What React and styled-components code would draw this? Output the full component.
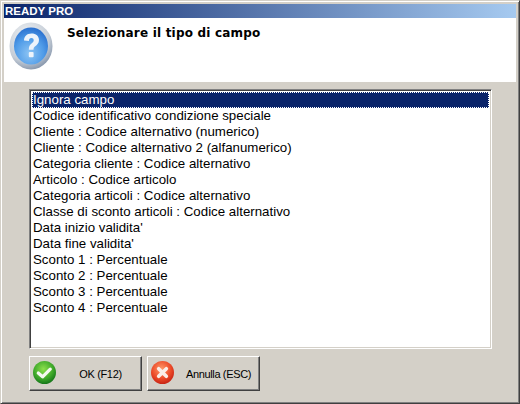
import React from 'react';
import styled, { createGlobalStyle } from 'styled-components';

const Global = createGlobalStyle`
  html, body { margin: 0; padding: 0; background: #d4d0c8; }
  * { box-sizing: border-box; }
`;

const Win = styled.div`
  width: 520px; height: 404px; display: flex; flex-direction: column;
  background: #d4d0c8; padding: 3px;
  border-top: 1px solid #d4d0c8;
  border-left: 1px solid #d4d0c8;
  border-right: 1px solid #404040;
  border-bottom: 1px solid #404040;
  box-shadow: inset 1px 1px 0 #fff, inset -1px -1px 0 #808080;
  font-family: "Liberation Sans", Arial, sans-serif;
`;
const TitleBar = styled.div`
  height: 14px; flex: none; padding-left: 1px;
  background: linear-gradient(90deg, #0a246a, #a6caf0);
  color: #fff; font: bold 11.500px/14px "Liberation Sans", sans-serif;
`;
const Header = styled.div`
  height: 64px; flex: none; background: #fff; display: flex; padding: 4px 0 0 5px;
`;
const HeadText = styled.div`
  margin: 4px 0 0 14px; font: bold 12px/14px "DejaVu Sans", sans-serif; letter-spacing: 0.2px; color: #000;
`;
const Body = styled.div`
  flex: 1; display: flex; flex-direction: column; padding: 7px 0 0 25px;
`;
const List = styled.div`
  width: 463px; height: 260px; background: #fff; padding: 2px;
  border-top: 1px solid #808080; border-left: 1px solid #808080;
  border-right: 1px solid #fff; border-bottom: 1px solid #fff;
  box-shadow: inset 1px 1px 0 #404040, inset -1px -1px 0 #d4d0c8;
`;
const Item = styled.div`
  height: 16px; font-size: 13.300px; line-height: 16px; padding-left: 1px; white-space: nowrap;
  color: ${p => (p.$sel ? '#fff' : '#000')};
  background: ${p => (p.$sel ? '#0a246a' : 'transparent')};
  outline: ${p => (p.$sel ? '1px dotted #fff' : 'none')};
  outline-offset: -1px;
`;
const Buttons = styled.div`
  display: flex; gap: 5px; margin-top: 7px;
`;
const Btn = styled.div`
  width: 113px; height: 35px; background: #d4d0c8; display: flex; align-items: center;
  padding: 0 0 3px 3px; font-size: 11px; letter-spacing: -0.35px; color: #000;
  border-top: 1px solid #fff; border-left: 1px solid #fff;
  border-right: 1px solid #404040; border-bottom: 1px solid #404040;
  box-shadow: inset -1px -1px 0 #808080;
`;
const BtnLabel = styled.span`
  flex: 1; text-align: center; padding: 3px 0 0 ${p => p.$pad}px;
`;

const Question = () => (
  <svg width="44" height="48" viewBox="0 0 44 44" preserveAspectRatio="none">
    <defs>
      <radialGradient id="qr" cx="40%" cy="30%" r="75%">
        <stop offset="0" stopColor="#f2f4f6" />
        <stop offset="0.7" stopColor="#c4ccd6" />
        <stop offset="1" stopColor="#7d8ea6" />
      </radialGradient>
      <radialGradient id="qb" cx="45%" cy="70%" r="70%">
        <stop offset="0" stopColor="#8cc4f4" />
        <stop offset="0.6" stopColor="#4f9be8" />
        <stop offset="1" stopColor="#2a70cf" />
      </radialGradient>
    </defs>
    <circle cx="22" cy="22" r="21.500" fill="url(#qr)" />
    <circle cx="22" cy="22" r="17" fill="url(#qb)" />
    <path d="M15 17c0-4 3-6.500 7.500-6.500S30 13 30 16.500c0 3-2 4.500-3.800 5.800-1.300 1-1.700 1.700-1.700 3.200h-4.700c0-3 .8-4.300 2.700-5.800 1.300-1 2.200-1.700 2.200-3 0-1.200-.9-2-2.300-2-1.600 0-2.400 1-2.500 2.800z" fill="#eef4fb" />
    <rect x="19.800" y="27.500" width="4.800" height="4.800" rx="1" fill="#eef4fb" />
  </svg>
);

const Ok = () => (
  <svg width="23" height="23" viewBox="0 0 24 24">
    <defs>
      <radialGradient id="gr" cx="45%" cy="35%" r="70%">
        <stop offset="0" stopColor="#8ce04c" />
        <stop offset="0.6" stopColor="#3ea82a" />
        <stop offset="1" stopColor="#0d6c16" />
      </radialGradient>
    </defs>
    <circle cx="12" cy="12" r="12" fill="url(#gr)" />
    <path d="M5.500 12.500l4.500 4 8-8" fill="none" stroke="#f4f8f0" strokeWidth="3.400" strokeLinecap="round" strokeLinejoin="round" />
  </svg>
);

const Cancel = () => (
  <svg width="23" height="23" viewBox="0 0 24 24">
    <defs>
      <radialGradient id="rr" cx="45%" cy="35%" r="70%">
        <stop offset="0" stopColor="#ff9a6a" />
        <stop offset="0.6" stopColor="#ec4a28" />
        <stop offset="1" stopColor="#c01c10" />
      </radialGradient>
    </defs>
    <circle cx="12" cy="12" r="12" fill="url(#rr)" />
    <path d="M8 8l8 8M16 8l-8 8" fill="none" stroke="#fbeee8" strokeWidth="3.800" strokeLinecap="round" />
  </svg>
);

const items = [
  'Ignora campo',
  'Codice identificativo condizione speciale',
  'Cliente : Codice alternativo (numerico)',
  'Cliente : Codice alternativo 2 (alfanumerico)',
  'Categoria cliente : Codice alternativo',
  'Articolo : Codice articolo',
  'Categoria articoli : Codice alternativo',
  'Classe di sconto articoli : Codice alternativo',
  "Data inizio validita'",
  "Data fine validita'",
  'Sconto 1 : Percentuale',
  'Sconto 2 : Percentuale',
  'Sconto 3 : Percentuale',
  'Sconto 4 : Percentuale',
];

export default function App() {
  return (
    <>
      <Global />
      <Win>
        <TitleBar>READY PRO</TitleBar>
        <Header>
          <Question />
          <HeadText>Selezionare il tipo di campo</HeadText>
        </Header>
        <Body>
          <List>
            {items.map((t, i) => (
              <Item key={t} $sel={i === 0}>{t}</Item>
            ))}
          </List>
          <Buttons>
            <Btn><Ok /><BtnLabel $pad={4}>OK (F12)</BtnLabel></Btn>
            <Btn><Cancel /><BtnLabel $pad={4}>Annulla (ESC)</BtnLabel></Btn>
          </Buttons>
        </Body>
      </Win>
    </>
  );
}
